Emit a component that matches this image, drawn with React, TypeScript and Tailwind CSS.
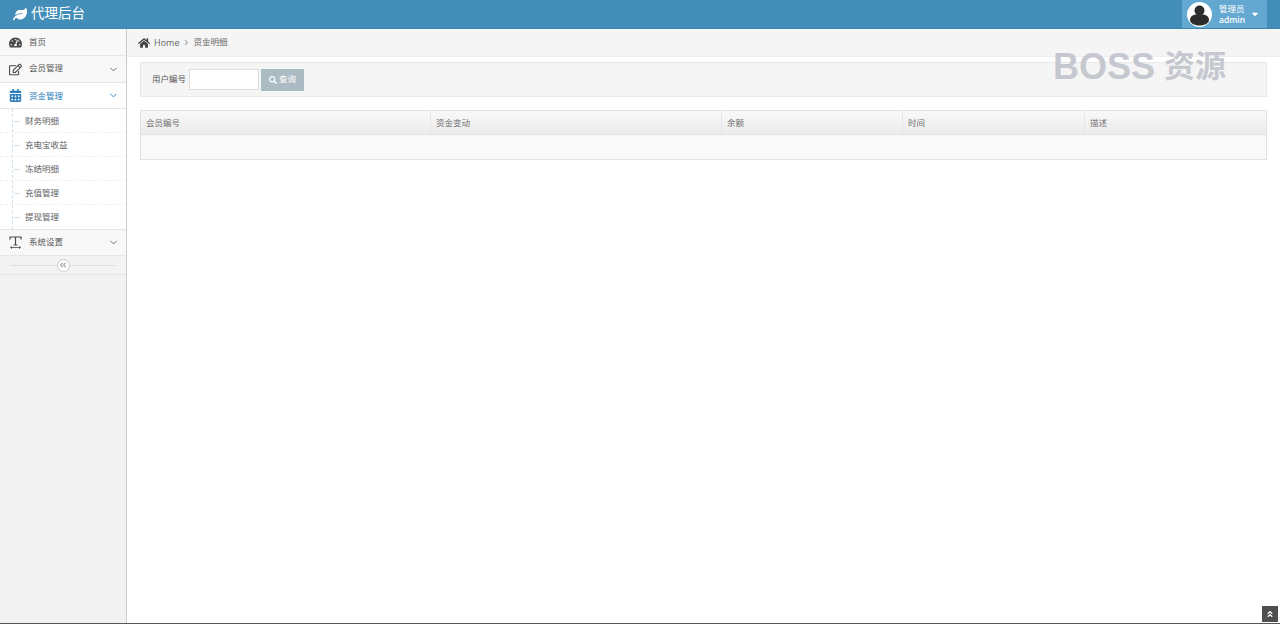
import React from "react";
import { FaAngleDoubleLeft, FaAngleDoubleUp, FaCalendarAlt, FaCaretDown, FaHome, FaLeaf, FaRegEdit, FaSearch, FaTachometerAlt, FaAngleRight } from "react-icons/fa";
import { ChevronDown } from "lucide-react";

const font = { fontFamily: '"Open Sans", "Noto Sans CJK SC", sans-serif' };

function TextWidthIcon() {
  return (
    <svg width="13" height="13" viewBox="0 0 13 13" fill="none" stroke="#4a4a4a" className="block">
      <path d="M1 3.5V1h11v2.5M6.5 1v8M4.5 9h4" strokeWidth="1.2" />
      <path d="M1.5 11.5h10M3 10.2l-1.5 1.3L3 12.8M10 10.2l1.5 1.3-1.5 1.3" strokeWidth="0.8" />
    </svg>
  );
}

function NavItem({ icon, label, active, caret, h, textClass }: { icon: React.ReactNode; label: string; active?: boolean; caret?: boolean; h: string; textClass?: string }) {
  return (
    <div className={`${h} flex items-center border-b border-[#e5e5e5] pl-[9px] pr-[7px] ${active ? "bg-white text-[#2b7dbc]" : "bg-[#f8f8f8] text-[#585858]"}`}>
      <span className={`w-[20px] text-[13px] ${active ? "text-[#2b7dbc]" : "text-[#4a4a4a]"}`}>{icon}</span>
      <span className={`text-[8.5px] leading-none ${textClass ?? ""}`}>{label}</span>
      {caret && <ChevronDown className={`ml-auto ${active ? "text-[#2b7dbc]" : "text-[#666666]"}`} size={11} strokeWidth={2} />}
    </div>
  );
}

function SubItem({ label, last }: { label: string; last?: boolean }) {
  return (
    <div className={`h-[24px] flex items-center pl-[25px] pt-[1px] text-[8.5px] leading-none text-[#616161] relative ${last ? "" : "border-b border-dashed border-[#f0f0f0]"}`}>
      <span className="absolute left-[14px] top-[12px] w-[6px] border-t border-dashed border-[#cfe2f0]" />
      {label}
    </div>
  );
}

export default function App() {
  const columns = [
    { label: "会员编号", w: "w-[290px]" },
    { label: "资金变动", w: "w-[291px]" },
    { label: "余额", w: "w-[181px]" },
    { label: "时间", w: "w-[182px]" },
    { label: "描述", w: "flex-1" },
  ];
  return (
    <div className="h-[624px] w-[1280px] overflow-hidden flex flex-col bg-white relative border-b border-[#555555]" style={font}>
      <header className="h-[29px] shrink-0 bg-[#438eb9] border-b border-[#3f86af] flex items-center text-white">
        <div className="flex items-center pl-[13px] gap-[4px]">
          <FaLeaf size={14} />
          <span className="text-[13.5px] leading-none">代理后台</span>
        </div>
        <div className="ml-auto mr-[13px] w-[85px] h-[28px] bg-[#62a8d1] flex items-center pl-[5px]">
          <svg width="25" height="25" viewBox="0 0 25 25" className="shrink-0">
            <circle cx="12.5" cy="12.5" r="12.5" fill="#ffffff" />
            <circle cx="12.5" cy="8.5" r="5" fill="#2c2c2c" />
            <path d="M3 18c0-4 4-6 9.5-6s9.5 2 9.5 6c0 3-4 5.5-9.5 5.5S3 21 3 18z" fill="#2c2c2c" />
          </svg>
          <div className="ml-[7px] text-[8.5px] leading-[11px] flex flex-col font-semibold">
            <span className="font-normal">管理员</span>
            <span>admin</span>
          </div>
          <FaCaretDown size={10} className="ml-[5px]" />
        </div>
      </header>
      <div className="flex-1 flex min-h-0">
        <aside className="w-[127px] shrink-0 bg-[#f2f2f2] border-r border-[#cccccc]">
          <NavItem h="h-[27px]" icon={<FaTachometerAlt />} label="首页" />
          <NavItem h="h-[27px]" icon={<FaRegEdit />} label="会员管理" caret textClass="mb-[2px]" />
          <NavItem h="h-[26px]" icon={<FaCalendarAlt />} label="资金管理" active caret textClass="mt-[1px]" />
          <div className="bg-white relative border-b border-[#e5e5e5]">
            <span className="absolute left-[12px] top-0 bottom-0 border-l border-dashed border-[#cfe2f0]" />
            <SubItem label="财务明细" />
            <SubItem label="充电宝收益" />
            <SubItem label="冻结明细" />
            <SubItem label="充值管理" />
            <SubItem label="提现管理" last />
          </div>
          <NavItem h="h-[26px]" icon={<TextWidthIcon />} label="系统设置" caret />
          <div className="h-[19px] bg-[#f3f3f3] border-b border-[#e5e5e5] flex items-center justify-center relative">
            <span className="absolute left-[10px] right-[10px] top-[9px] border-t border-[#e0e0e0]" />
            <span className="relative w-[13px] h-[13px] rounded-full bg-white border border-[#cccccc] flex items-center justify-center text-[#aaaaaa]">
              <FaAngleDoubleLeft size={8} />
            </span>
          </div>
        </aside>
        <main className="flex-1 min-w-0">
          <div className="h-[28px] bg-[#f5f5f5] border-b border-[#eeeeee] flex items-center pl-[11px] text-[8.5px] text-[#666666]">
            <FaHome size={12} className="text-[#4a4a4a]" />
            <span className="ml-[4px] text-[9px]">Home</span>
            <FaAngleRight size={9} className="ml-[3px] mr-[2px] text-[#b2b6bf]" />
            <span>资金明细</span>
          </div>
          <div className="mt-[5px] ml-[13px] mr-[13px] h-[35px] bg-[#f5f5f5] border border-[#e8e8e8] flex items-center pl-[11px]">
            <span className="text-[8.5px] text-[#555555] mb-[1px]">用户编号</span>
            <div className="ml-[3px] w-[70px] h-[21px] bg-white border border-[#dddddd]" />
            <button className="ml-[2px] w-[43px] h-[22px] bg-[#abbac3] text-white text-[8.5px] flex items-center justify-center gap-[2px]">
              <FaSearch size={8} />
              查询
            </button>
          </div>
          <div className="mt-[13px] ml-[13px] mr-[13px] h-[50px] border border-[#e2e2e2]">
            <div className="h-[24px] flex bg-gradient-to-b from-[#f8f8f8] to-[#ececec] border-b border-[#e2e2e2]">
              {columns.map((c, i) => (
                <div key={c.label} className={`${c.w} flex items-center pl-[5px] pt-[1px] text-[8.5px] text-[#707070] ${i < 4 ? "border-r border-[#e6e6e6]" : ""}`}>
                  {c.label}
                </div>
              ))}
            </div>
            <div className="h-[24px] bg-[#f9f9f9]" />
          </div>
        </main>
      </div>
      <div className="absolute left-[1053px] top-[46px] leading-[42px] font-bold text-[#c6c8d0] whitespace-nowrap flex items-center gap-[9px]" style={{ fontFamily: '"Liberation Sans", "Noto Sans CJK SC", sans-serif' }}>
        <span className="text-[36px]">BOSS</span>
        <span className="text-[31px]">资源</span>
      </div>
      <div className="absolute left-[1262px] top-[606px] w-[16px] h-[16px] bg-[#4f4f4f] flex items-center justify-center text-white">
        <FaAngleDoubleUp size={8} />
      </div>
    </div>
  );
}
